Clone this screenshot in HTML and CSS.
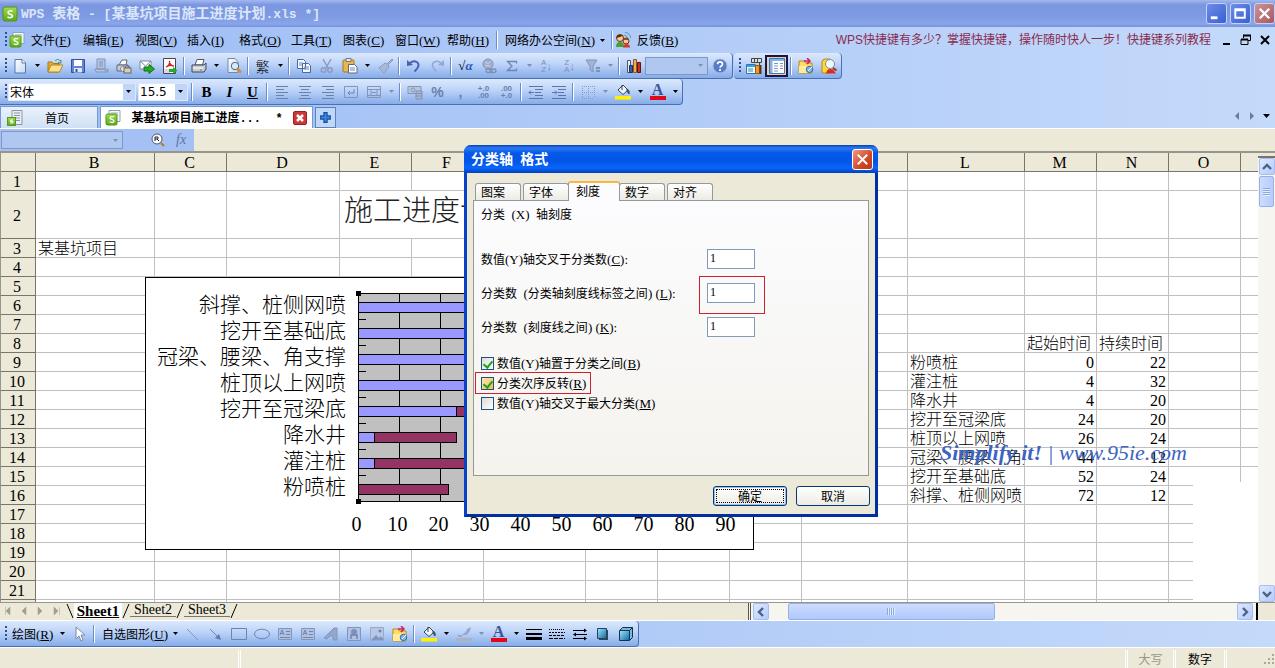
FILE: index.html
```
<!DOCTYPE html>
<html lang="zh-CN">
<head>
    <meta charset="UTF-8">
    <meta name="viewport" content="width=device-width, initial-scale=1.0">
    <title>WPS 表格</title>
    <link rel="stylesheet" href="styles.css">
</head>
<body>

    <!-- icon set, 16x16 -->
    <svg class="sprite" aria-hidden="true">
        <defs>
            <linearGradient id="gGreen" x1="0" y1="0" x2="0" y2="1"><stop offset="0" stop-color="#a4dc50"/><stop offset="1" stop-color="#5aa818"/></linearGradient>
            <linearGradient id="gBlue" x1="0" y1="0" x2="1" y2="1"><stop offset="0" stop-color="#a8e4f8"/><stop offset="1" stop-color="#0868a0"/></linearGradient>
            <linearGradient id="gPage" x1="0" y1="0" x2="1" y2="1"><stop offset="0" stop-color="#fff"/><stop offset="1" stop-color="#c4d8f4"/></linearGradient>
        </defs>
        <symbol id="i-s" viewBox="0 0 16 16"><rect x="1" y="1" width="14" height="14" rx="2" fill="url(#gGreen)" stroke="#4c9814"/><path d="M10.5 5.5C9 4.500 6 4.500 6 6.500S10.500 8 10.500 10 7 12 5.500 10.800" fill="none" stroke="#fff" stroke-width="1.500"/></symbol>
        <symbol id="i-doc" viewBox="0 0 16 16"><path d="M4 .5h11v11H4z" fill="#f4f8fc" stroke="#8aa4b8"/><path d="M6 3h7M6 5h7" stroke="#9ab"/><rect x="1" y="4" width="11" height="11" rx="1.500" fill="url(#gGreen)" stroke="#4c9814"/><path d="M9 7C8 6.300 5 6.300 5 8s4 1 4 3-3 1.700-4.500.8" fill="none" stroke="#fff" stroke-width="1.300"/></symbol>
        <symbol id="i-home" viewBox="0 0 16 16"><path d="M5 .5h10v14H5z" fill="#e8eef4" stroke="#8898a8"/><path d="M7 3h6M7 5.500h6M9 8h4M9 10.500h4" stroke="#8898a8"/><rect x=".5" y="7.500" width="8" height="8" fill="url(#gGreen)" stroke="#5a9a20"/><path d="M6 10H3.500v1.500H6V13H3" fill="none" stroke="#fff"/></symbol>
        <symbol id="i-new" viewBox="0 0 16 16"><path d="M3 1.500h7l3.500 3.500v10H3z" fill="url(#gPage)" stroke="#5878a8"/><path d="M10 1.500V5h3.500" fill="#fff" stroke="#5878a8"/></symbol>
        <symbol id="i-open" viewBox="0 0 16 16"><path d="M1 14V4h4l1.500 1.500H12V14z" fill="#e8a838" stroke="#a87818"/><path d="M1 14l3-7h12l-3.500 7z" fill="#ffe08a" stroke="#b08820"/><path d="M8 3c2-2 4-2 5 0l1-1v3h-3l1-1" fill="none" stroke="#487"/></symbol>
        <symbol id="i-save" viewBox="0 0 16 16"><path d="M1.500 1.500h13v13h-13z" fill="#6484dc" stroke="#3850a0"/><path d="M4 2h8v6H4z" fill="#fff"/><path d="M4 10h8v4.500H4z" fill="#dfe6f4"/><path d="M5.500 11h2v3h-2z" fill="#3850a0"/></symbol>
        <symbol id="i-saveall" viewBox="0 0 16 16"><path d="M4 1h8v10H4zM2 11h10c0 3 2 3 2 0h1v3H4c-2 0-2-3-2-3z" fill="#b4c4e0" stroke="#8294b8"/><path d="M6 4h4M6 6h4M6 8h4" stroke="#8294b8"/></symbol>
        <symbol id="i-perm" viewBox="0 0 16 16"><path d="M3 7l3-5h5l-1 5z" fill="#fff" stroke="#667"/><path d="M1 7h11v6H1z" fill="#c8ccd4" stroke="#667"/><circle cx="7" cy="11" r="2.500" fill="#e0e4ec" stroke="#556" stroke-dasharray="1.500 .8"/><rect x="8" y="10" width="7" height="5" fill="#d8d0b0" stroke="#667"/><path d="M9.500 10V8.500q2-2 4 0V10" fill="none" stroke="#667"/></symbol>
        <symbol id="i-send" viewBox="0 0 16 16"><path d="M1 3h11v8H1z" fill="#fff" stroke="#7a8aa0"/><path d="M1 3l5.500 5L12 3" fill="none" stroke="#7a8aa0"/><path d="M5 9h5V6.500l5.500 4.500-5.500 4.500V13H5z" fill="#28a828" stroke="#107010"/></symbol>
        <symbol id="i-pdf" viewBox="0 0 16 16"><path d="M1.500 .5h12v15h-12z" fill="#fff" stroke="#445"/><path d="M4 9c3-1 4-3 3.500-6C7 5 9 8 12 8 9 7 6 7.500 4 9z" fill="none" stroke="#d02020" stroke-width="1.300"/><path d="M2 11h6v4H2z" fill="#d8dce4"/><path d="M7 11h4V9l4.500 3.500L11 16v-2H7z" fill="#28a828"/></symbol>
        <symbol id="i-print" viewBox="0 0 16 16"><path d="M4 7l2-5.500h7L11.500 7z" fill="#fff" stroke="#556"/><path d="M1 7h12l2-2v6l-2 3H1z" fill="#c8ccd4" stroke="#445"/><path d="M2 10h10" stroke="#fff"/><path d="M9 12h2" stroke="#3a3"/></symbol>
        <symbol id="i-preview" viewBox="0 0 16 16"><path d="M2 .5h7l3 3v11H2z" fill="url(#gPage)" stroke="#7888a0"/><circle cx="9" cy="8" r="3.700" fill="#d4ecfc" stroke="#567"/><path d="M11.500 11l3.500 3.500" stroke="#e08828" stroke-width="2.500"/></symbol>
        <symbol id="i-copy" viewBox="0 0 16 16"><path d="M1.500 1.500h6l2 2v7h-8zM6.500 5.500h6l2 2v7h-8z" fill="#f4f8ff" stroke="#4c68a0"/><path d="M3 5h4M3 7h3M8 9h5M8 11h5" stroke="#6888c0"/></symbol>
        <symbol id="i-cut" viewBox="0 0 16 16"><path d="M4 1l5 9M12 1L7 10" stroke="#8a9cc0" stroke-width="1.500"/><circle cx="4.500" cy="12" r="2.300" fill="none" stroke="#8a9cc0" stroke-width="1.500"/><circle cx="11" cy="12" r="2.300" fill="none" stroke="#8a9cc0" stroke-width="1.500"/></symbol>
        <symbol id="i-paste" viewBox="0 0 16 16"><rect x="1" y="2" width="11" height="12" rx="1" fill="#e8b850" stroke="#a87820"/><path d="M4 .5h5v3H4z" fill="#e8e8e8" stroke="#777"/><path d="M6.500 6.500h6l2.500 2.500v6H6.500z" fill="#fff" stroke="#667"/><path d="M8 10h5M8 12h5" stroke="#6888c0"/></symbol>
        <symbol id="i-brush" viewBox="0 0 16 16"><path d="M15 1l-5 5-2-1-6 5 5 5 5-6-1-2 5-5z" fill="#a8b8d8" stroke="#8a9cc0"/></symbol>
        <symbol id="i-undo" viewBox="0 0 16 16"><path d="M4 5c5-4 10 0 8 4-.8 2-2 3-3.500 4.500" fill="none" stroke="#4a60b0" stroke-width="2"/><path d="M1 8V2l6 5z" fill="#4a60b0"/></symbol>
        <symbol id="i-redo" viewBox="0 0 16 16"><path d="M12 5C7 1 2 5 4 9c.8 2 2 3 3.500 4.500" fill="none" stroke="#94a8d0" stroke-width="1.500"/><path d="M15 8V2L9 7z" fill="#94a8d0"/></symbol>
        <symbol id="i-globe" viewBox="0 0 16 16"><circle cx="7" cy="6" r="5" fill="#a0b0cc" stroke="#8496b8"/><path d="M4 4q3 3 6-1M4 8q3-2 6 1" fill="none" stroke="#c8d4ea"/><rect x="5" y="11" width="6" height="3.500" rx="1.700" fill="none" stroke="#8090b4" stroke-width="1.500"/><rect x="9" y="11" width="6" height="3.500" rx="1.700" fill="none" stroke="#8090b4" stroke-width="1.500"/></symbol>
        <symbol id="i-sum" viewBox="0 0 16 16"><path d="M12.500 5.500V3.500h-9L8 8l-4.500 4.500h9v-2" fill="none" stroke="#7084b0" stroke-width="1.300"/></symbol>
        <symbol id="i-funnel" viewBox="0 0 16 16"><path d="M1 2h11L8 8v6l-3-2V8z" fill="#a4b4d4" stroke="#8294b8"/><path d="M11 9h4v2h-4zM11 12h4v2h-4z" fill="#7c90b8"/></symbol>
        <symbol id="i-chart" viewBox="0 0 16 16"><path d="M1.500 2.500h3v12h-3z" fill="#e8ecf4" stroke="#556"/><path d="M3.500 7.500h3v7h-3z" fill="#3858b8" stroke="#234"/><path d="M7.500 1.500h3v13h-3z" fill="#f0b040" stroke="#854"/><path d="M11.500 4.500h3v10h-3z" fill="#c83020" stroke="#611"/></symbol>
        <symbol id="i-help" viewBox="0 0 16 16"><circle cx="8" cy="8" r="7" fill="#5878c8" stroke="#a8b8dc"/><path d="M5.500 6.200c0-3.200 5-3.200 5 0 0 1.800-2.500 1.800-2.500 3.600M8 11v2" fill="none" stroke="#fff" stroke-width="1.700"/></symbol>
        <symbol id="i-task" viewBox="0 0 16 16"><path d="M5.500.500h10v4h-10z" fill="#e0e0d8" stroke="#444"/><path d="M8.500 1v3M11.500 1v3M13.500 5v3" stroke="#444"/><path d="M.5 6.500h9v9h-9z" fill="#e8f8ff" stroke="#2878b8"/><path d="M1 7h8v2H1z" fill="#38a0e0"/><path d="M2 11h5M2 13h5" stroke="#48a"/><path d="M9.500 7.500h4v8h-4z" fill="#f09828" stroke="#a05810"/><path d="M13.500 7h2v9h-2z" fill="#5a3410"/></symbol>
        <symbol id="i-pane" viewBox="0 0 16 16"><path d="M.5.500h15v15H.500z" fill="#fff" stroke="#3878b8"/><path d="M1 1h14v2H1zM1 1h2.500v14H1z" fill="#80b4e8"/><path d="M5 5.500h4M5 8h4M5 10.500h4M5 13h4M11 5.500h3M11 8h3M11 10.500h3" stroke="#7898c0"/></symbol>
        <symbol id="i-folder" viewBox="0 0 16 16"><path d="M1 3h5l1.500 2H14v10H1z" fill="#ffdc68" stroke="#b88818"/><path d="M1 8h13v7H1z" fill="#ffeb98"/><path d="M6 3h6M9 0l3 3-3 3" fill="none" stroke="#d02060" stroke-width="1.500"/><circle cx="11.500" cy="11.500" r="3.200" fill="#80b8e8" stroke="#2868a8"/><path d="M10 13l4-4" stroke="#fff"/></symbol>
        <symbol id="i-find" viewBox="0 0 16 16"><path d="M1 15V4q0-3 4-3h4v14z" fill="#ffd838" stroke="#b88818"/><path d="M5 15.500q1-6 7-4l3 4z" fill="#d83020"/><circle cx="9" cy="6" r="4.500" fill="#eef8ff" stroke="#889"/><path d="M12 10l3.500 2.500" stroke="#a02818" stroke-width="2"/></symbol>
        <symbol id="i-people" viewBox="0 0 16 16"><path d="M9 3q3 0 4 4M10 .5q5 0 6 6" fill="none" stroke="#6890b0"/><circle cx="5" cy="6" r="3.500" fill="#f8c898" stroke="#6a3410"/><path d="M1.500 6q0-5 7-2.500L5 5z" fill="#5a2c10"/><circle cx="11" cy="9" r="3" fill="#f8c898" stroke="#6a3410"/><path d="M8 8q2-4 6 0z" fill="#a04820"/><path d="M1 15q0-5 4-5t4 5z" fill="#48a030"/><path d="M8 15.500q0-3.500 3.500-3.500t3.500 3.500z" fill="#d83828"/></symbol>
        <symbol id="i-left" viewBox="0 0 16 16"><path d="M2 2.500h12M2 5.500h8M2 8.500h12M2 11.500h8M2 14.500h12" stroke="#6c80a8"/></symbol>
        <symbol id="i-center" viewBox="0 0 16 16"><path d="M2 2.500h12M4 5.500h8M2 8.500h12M4 11.500h8M2 14.500h12" stroke="#6c80a8"/></symbol>
        <symbol id="i-right" viewBox="0 0 16 16"><path d="M2 2.500h12M6 5.500h8M2 8.500h12M6 11.500h8M2 14.500h12" stroke="#6c80a8"/></symbol>
        <symbol id="i-wrap" viewBox="0 0 16 16"><path d="M1.500 2.500h13v11h-13z" fill="none" stroke="#8496b8"/><path d="M11 5v4H5M7 7L5 9l2 2" fill="none" stroke="#7084b0"/></symbol>
        <symbol id="i-merge" viewBox="0 0 16 16"><path d="M1.500 2.500h13v11h-13zM1.500 5.500h13M1.500 11.500h13" fill="none" stroke="#8496b8"/><path d="M5 6v5M11 6v5M6 8.500h4" stroke="#8496b8"/></symbol>
        <symbol id="i-money" viewBox="0 0 16 16"><path d="M1 2.500h13v7H1z" fill="#b8c6e0" stroke="#8496b8"/><circle cx="6" cy="6" r="2" fill="none" stroke="#8496b8"/><path d="M9 7h6v8H9zM9 9.500h6M9 12h6" fill="#a8b8d8" stroke="#8090b4"/></symbol>
        <symbol id="i-indent" viewBox="0 0 16 16"><path d="M1 2.500h14M7 5.500h8M7 8.500h6M7 11.500h8M1 14.500h14M1 8.500h5M4 6.500l2 2-2 2" fill="none" stroke="#5c74a8"/></symbol>
        <symbol id="i-outdent" viewBox="0 0 16 16"><path d="M1 2.500h14M7 5.500h8M7 8.500h6M7 11.500h8M1 14.500h14M1 8.500h5M3 6.500l-2 2 2 2" fill="none" stroke="#5c74a8"/></symbol>
        <symbol id="i-border" viewBox="0 0 16 16"><path d="M2 2.500h12M2 8.500h12M2 14.500h12M2.500 2v12M8.500 2v12M14.500 2v12" stroke="#8a9cc0" stroke-dasharray="1 1"/></symbol>
        <symbol id="i-fill" viewBox="0 0 16 16"><path d="M3 6l5-5 5 5-5 4.500z" fill="#eef4fc" stroke="#345"/><path d="M7 1v5M12 5q3 1 2 5l-2-3z" fill="#4878c0" stroke="#345"/><path d="M0 12h16v3.500H0z" fill="#fff200"/></symbol>
        <symbol id="i-pen" viewBox="0 0 16 16"><path d="M15 1q-1 6-5 8H5q5-2 6-6zM5 9H1l2 2h4z" fill="#98a8c8"/><path d="M0 12h16v3.500H0z" fill="#a8b4c4"/></symbol>
        <symbol id="i-cursor" viewBox="0 0 16 16"><path d="M4 1v12l3-3 2 5 2-1-2-5h4z" fill="#fff" stroke="#7888a8"/></symbol>
        <symbol id="i-line" viewBox="0 0 16 16"><path d="M2 3l11 11" stroke="#8496b8"/></symbol>
        <symbol id="i-arrow" viewBox="0 0 16 16"><path d="M2 3l9 9" stroke="#7084a8"/><path d="M13 14l-6-2 4-4z" fill="#6478a0"/></symbol>
        <symbol id="i-rect" viewBox="0 0 16 16"><path d="M.5 2.500h15v11H.5z" fill="none" stroke="#7084a8"/></symbol>
        <symbol id="i-oval" viewBox="0 0 16 16"><ellipse cx="8" cy="8" rx="7.500" ry="4.800" fill="none" stroke="#7084a8"/></symbol>
        <symbol id="i-textbox" viewBox="0 0 16 16"><path d="M1.500 2.500h13v11h-13z" fill="#b0c2e4" stroke="#8496b8"/><path d="M3 9l2-5 2 5M4 7.500h2M9 5.500h4M9 8.500h4M3 11.500h10" fill="none" stroke="#7084b0"/></symbol>
        <symbol id="i-art" viewBox="0 0 16 16"><path d="M1 12L11 2h3v12h-4v-4H7l-3 3z" fill="#94a6cc" stroke="#8496b8"/></symbol>
        <symbol id="i-clip" viewBox="0 0 16 16"><path d="M1.500 1.500h13v13h-13z" fill="#b0c2e4" stroke="#8496b8"/><circle cx="8" cy="6" r="3" fill="#7c90b8"/><path d="M5 13V9h6v4" fill="none" stroke="#7084b0" stroke-width="1.500"/></symbol>
        <symbol id="i-image" viewBox="0 0 16 16"><path d="M1.500 1.500h13v13h-13z" fill="#b8c8e4" stroke="#98a8c8"/><circle cx="11" cy="5" r="1.500" fill="#7084b0"/><path d="M2 14l5-5 3 3 2-2 3 4z" fill="#8094bc"/></symbol>
        <symbol id="i-weight" viewBox="0 0 16 16"><path d="M0 3.500h16" stroke="#000"/><path d="M0 8h16" stroke="#000" stroke-width="2"/><path d="M0 12.500h16" stroke="#000" stroke-width="3"/></symbol>
        <symbol id="i-dash" viewBox="0 0 16 16"><path d="M0 3.500h16" stroke="#000" stroke-dasharray="1 1"/><path d="M0 6.500h16" stroke="#000" stroke-dasharray="2 1"/><path d="M0 9.500h16" stroke="#000" stroke-dasharray="3 1"/><path d="M0 12.500h16" stroke="#000" stroke-dasharray="4 1"/></symbol>
        <symbol id="i-arrows" viewBox="0 0 16 16"><path d="M1 4.500h13M3 8.500h12M1 12.500h13" stroke="#000"/><path d="M12 2.500l3 2-3 2zM4 6.500l-3 2 3 2zM12 10.500l3 2-3 2z"/></symbol>
        <symbol id="i-shadow" viewBox="0 0 16 16"><path d="M4 4h9v10H4z" fill="#345"/><path d="M2.500 2.500h9v10h-9z" fill="url(#gBlue)" stroke="#246"/></symbol>
        <symbol id="i-cube" viewBox="0 0 16 16"><path d="M1.500 4.500l3-3h10v10l-3 3" fill="#78b8d8" stroke="#135"/><path d="M1.500 4.500h10v10h-10z" fill="url(#gBlue)" stroke="#135"/><path d="M11.500 4.500l3-3" stroke="#135"/></symbol>
        <symbol id="i-caret" viewBox="0 0 5 3"><path d="M0 0h5L2.500 3z" fill="currentColor"/></symbol>
        <symbol id="i-chev" viewBox="0 0 10 10"><path d="M1 7l4-4 4 4" fill="none" stroke="#4d6185" stroke-width="2.400"/></symbol>
    </svg>

    <header class="titlebar">
        <svg class="icon"><use href="#i-s"/></svg>
        <h1><span class="en">WPS </span>表格<span class="en"> - [</span>某基坑项目施工进度计划<span class="en">.xls *]</span></h1>
        <button class="winbtn" aria-label="最小化"><svg viewBox="0 0 20 20"><path d="M4 13h7v3H4z" fill="#fff"/></svg></button>
        <button class="winbtn" aria-label="最大化"><svg viewBox="0 0 20 20"><path d="M4.500 5.500h10v9h-10zM4.500 6.500h10" fill="none" stroke="#fff" stroke-width="2"/></svg></button>
        <button class="winbtn close" aria-label="关闭"><svg viewBox="0 0 20 20"><path d="M5 5l10 10M15 5L5 15" stroke="#fff" stroke-width="2.500"/></svg></button>
    </header>

    <nav class="menubar">
        <span class="grip"></span>
        <svg class="icon"><use href="#i-doc"/></svg>
        <button class="menu">文件<span class="key">(<u>F</u>)</span></button>
        <button class="menu">编辑<span class="key">(<u>E</u>)</span></button>
        <button class="menu">视图<span class="key">(<u>V</u>)</span></button>
        <button class="menu">插入<span class="key">(<u>I</u>)</span></button>
        <button class="menu">格式<span class="key">(<u>O</u>)</span></button>
        <button class="menu">工具<span class="key">(<u>T</u>)</span></button>
        <button class="menu">图表<span class="key">(<u>C</u>)</span></button>
        <button class="menu">窗口<span class="key">(<u>W</u>)</span></button>
        <button class="menu">帮助<span class="key">(<u>H</u>)</span></button>
        <span class="sep"></span>
        <button class="menu long">网络办公空间<span class="key">(<u>N</u>)</span></button>
        <button class="drop" aria-label="网络办公空间选项"><svg class="caret"><use href="#i-caret"/></svg></button>
        <span class="sep"></span>
        <svg class="icon"><use href="#i-people"/></svg>
        <button class="menu">反馈<span class="key">(<u>B</u>)</span></button>
        <a class="tip" href="#">WPS快捷键有多少？掌握快捷键，操作随时快人一步！快捷键系列教程</a>
        <button class="docbtn" aria-label="最小化窗口"><svg viewBox="0 0 12 12"><path d="M2 9h7v2H2z"/></svg></button>
        <button class="docbtn" aria-label="还原窗口"><svg viewBox="0 0 12 12"><path d="M3.500 4V1.500h7v5H8" fill="none" stroke="#000"/><path d="M3 1.500h8" stroke="#000" stroke-width="2"/><path d="M1 5.500h7v5H1z" fill="none" stroke="#000"/><path d="M1 5.500h7" stroke="#000" stroke-width="2"/></svg></button>
        <button class="docbtn" aria-label="关闭窗口"><svg viewBox="0 0 12 12"><path d="M2 2l8 8M10 2l-8 8" stroke="#000" stroke-width="2"/></svg></button>
    </nav>

    <div class="toolrow">
        <div class="toolbar">
            <span class="grip"></span>
            <button class="tool" aria-label="新建"><svg class="icon"><use href="#i-new"/></svg></button>
            <button class="drop" aria-label="新建选项"><svg class="caret"><use href="#i-caret"/></svg></button>
            <button class="tool" aria-label="打开"><svg class="icon"><use href="#i-open"/></svg></button>
            <button class="tool" aria-label="保存"><svg class="icon"><use href="#i-save"/></svg></button>
            <button class="tool" aria-label="全部保存"><svg class="icon"><use href="#i-saveall"/></svg></button>
            <button class="tool" aria-label="权限"><svg class="icon"><use href="#i-perm"/></svg></button>
            <button class="tool" aria-label="发送"><svg class="icon"><use href="#i-send"/></svg></button>
            <button class="tool" aria-label="输出PDF"><svg class="icon"><use href="#i-pdf"/></svg></button>
            <span class="sep"></span>
            <button class="tool" aria-label="打印"><svg class="icon"><use href="#i-print"/></svg></button>
            <button class="drop" aria-label="打印选项"><svg class="caret"><use href="#i-caret"/></svg></button>
            <button class="tool" aria-label="打印预览"><svg class="icon"><use href="#i-preview"/></svg></button>
            <span class="sep"></span>
            <button class="tool trad">繁</button>
            <button class="drop" aria-label="繁简转换选项"><svg class="caret"><use href="#i-caret"/></svg></button>
            <span class="sep"></span>
            <button class="tool" aria-label="复制"><svg class="icon"><use href="#i-copy"/></svg></button>
            <button class="tool" aria-label="剪切"><svg class="icon"><use href="#i-cut"/></svg></button>
            <button class="tool" aria-label="粘贴"><svg class="icon"><use href="#i-paste"/></svg></button>
            <button class="drop" aria-label="粘贴选项"><svg class="caret"><use href="#i-caret"/></svg></button>
            <button class="tool" aria-label="格式刷"><svg class="icon"><use href="#i-brush"/></svg></button>
            <span class="sep"></span>
            <button class="tool" aria-label="撤消"><svg class="icon"><use href="#i-undo"/></svg></button>
            <button class="tool" aria-label="恢复"><svg class="icon"><use href="#i-redo"/></svg></button>
            <span class="sep"></span>
            <button class="tool formula">√<i>α</i></button>
            <button class="tool" aria-label="超链接"><svg class="icon"><use href="#i-globe"/></svg></button>
            <button class="tool" aria-label="求和"><svg class="icon"><use href="#i-sum"/></svg></button>
            <button class="drop off" aria-label="求和选项"><svg class="caret"><use href="#i-caret"/></svg></button>
            <button class="tool sort"><span>A<br>Z</span>↓</button>
            <button class="tool sort"><span>Z<br>A</span>↓</button>
            <button class="tool" aria-label="筛选"><svg class="icon"><use href="#i-funnel"/></svg></button>
            <button class="drop off" aria-label="筛选选项"><svg class="caret"><use href="#i-caret"/></svg></button>
            <span class="sep"></span>
            <button class="tool" aria-label="图表"><svg class="icon"><use href="#i-chart"/></svg></button>
            <label class="combo zoom off"><select aria-label="显示比例"><option></option></select><svg class="caret"><use href="#i-caret"/></svg></label>
            <button class="tool" aria-label="帮助"><svg class="icon"><use href="#i-help"/></svg></button>
        </div>
        <div class="toolbar">
            <span class="grip"></span>
            <button class="tool" aria-label="任务窗格"><svg class="icon"><use href="#i-task"/></svg></button>
            <button class="tool pressed" aria-label="工作窗口"><svg class="icon"><use href="#i-pane"/></svg></button>
            <span class="sep"></span>
            <button class="tool" aria-label="素材库"><svg class="icon"><use href="#i-folder"/></svg></button>
            <button class="tool" aria-label="查找"><svg class="icon"><use href="#i-find"/></svg></button>
        </div>
    </div>

    <div class="toolrow">
        <div class="toolbar">
            <span class="grip"></span>
            <label class="combo font"><select aria-label="字体"><option>宋体</option></select><svg class="caret"><use href="#i-caret"/></svg></label>
            <label class="combo size"><select aria-label="字号"><option>15.5</option></select><svg class="caret"><use href="#i-caret"/></svg></label>
            <span class="sep"></span>
            <button class="tool letter"><b>B</b></button>
            <button class="tool letter"><i>I</i></button>
            <button class="tool letter"><u>U</u></button>
            <span class="sep"></span>
            <button class="tool" aria-label="左对齐"><svg class="icon"><use href="#i-left"/></svg></button>
            <button class="tool" aria-label="居中"><svg class="icon"><use href="#i-center"/></svg></button>
            <button class="tool" aria-label="右对齐"><svg class="icon"><use href="#i-right"/></svg></button>
            <button class="tool" aria-label="自动换行"><svg class="icon"><use href="#i-wrap"/></svg></button>
            <button class="tool" aria-label="合并居中"><svg class="icon"><use href="#i-merge"/></svg></button>
            <button class="drop off" aria-label="合并选项"><svg class="caret"><use href="#i-caret"/></svg></button>
            <span class="sep"></span>
            <button class="tool" aria-label="货币"><svg class="icon"><use href="#i-money"/></svg></button>
            <button class="tool percent">%</button>
            <button class="tool percent">,</button>
            <button class="tool decimal">+.0<br>.00</button>
            <button class="tool decimal">.00<br>+.0</button>
            <span class="sep"></span>
            <button class="tool" aria-label="减少缩进"><svg class="icon"><use href="#i-outdent"/></svg></button>
            <button class="tool" aria-label="增加缩进"><svg class="icon"><use href="#i-indent"/></svg></button>
            <span class="sep"></span>
            <button class="tool" aria-label="边框"><svg class="icon"><use href="#i-border"/></svg></button>
            <button class="drop off" aria-label="边框选项"><svg class="caret"><use href="#i-caret"/></svg></button>
            <button class="tool" aria-label="填充颜色"><svg class="icon"><use href="#i-fill"/></svg></button>
            <button class="drop" aria-label="填充选项"><svg class="caret"><use href="#i-caret"/></svg></button>
            <button class="tool fontcolor"><span>A</span></button>
            <button class="drop" aria-label="字体颜色选项"><svg class="caret"><use href="#i-caret"/></svg></button>
        </div>
    </div>

    <div class="doctabs">
        <button class="doctab"><svg class="icon"><use href="#i-home"/></svg><span>首页</span></button>
        <div class="doctab open">
            <svg class="icon"><use href="#i-doc"/></svg>
            <span>某基坑项目施工进度<span class="en">...  *</span></span>
            <button class="tabclose" aria-label="关闭标签"><svg viewBox="0 0 12 12"><path d="M3 3l6 6M9 3l-6 6" stroke="#fff" stroke-width="2.500"/></svg></button>
        </div>
        <button class="addtab" aria-label="新建标签"><svg viewBox="0 0 12 12"><path d="M4.500 1.500h3v3h3v3h-3v3h-3v-3h-3v-3h3z" fill="#3c80e0" stroke="#1c4ca0"/></svg></button>
        <span class="tabnav">
            <svg viewBox="0 0 36 8"><path d="M5 0v8L1 4z" fill="#6c7c98"/><path d="M16 0v8l4-4z" fill="#6c7c98"/><path d="M29 2h7l-3.500 4z"/></svg>
        </span>
    </div>

    <div class="formulabar">
        <div class="namepart">
            <label class="combo name off"><input aria-label="名称框"><svg class="caret"><use href="#i-caret"/></svg></label>
            <svg class="icon" viewBox="0 0 16 16"><circle cx="7" cy="7" r="5" fill="#fff" stroke="#556"/><path d="M5 9V5h3v2H5m2 0l2 2" fill="none" stroke="#124"/><path d="M11 11l3 3" stroke="#b87828" stroke-width="2"/></svg>
            <span class="fx">fx</span>
        </div>
        <input class="formula-input" aria-label="编辑栏">
    </div>

    <main class="sheet">
        <div class="cells">
            <table class="grid">
                <colgroup>
                    <col class="c-head"><col class="c-b"><col class="c-std"><col class="c-d"><col class="c-std"><col class="c-std"><col class="c-g"><col class="c-std"><col class="c-std"><col class="c-std"><col class="c-k"><col class="c-l"><col class="c-std"><col class="c-std"><col class="c-std"><col>
                </colgroup>
                <thead>
                    <tr><th></th><th>B</th><th>C</th><th>D</th><th>E</th><th>F</th><th>G</th><th>H</th><th>I</th><th>J</th><th>K</th><th>L</th><th>M</th><th>N</th><th>O</th><th></th></tr>
                </thead>
                <tbody id="rows"></tbody>
            </table>
            <div class="blank"></div>

            <section class="chart">
                <div class="labels" id="chartLabels"></div>
                <div class="plot" id="chartPlot"></div>
                <div class="axis" id="chartAxis"></div>
            </section>

            <p class="mark"><b>Simplify it!</b> | www.95ie.com</p>
        </div>
        <div class="vscroll">
            <span class="split"></span>
            <button class="scrollbtn" aria-label="向上滚动"><svg viewBox="0 0 10 10"><use href="#i-chev"/></svg></button>
            <span class="thumb"></span>
            <button class="scrollbtn last" aria-label="向下滚动"><svg class="down" viewBox="0 0 10 10"><use href="#i-chev"/></svg></button>
        </div>
    </main>

    <div class="sheetbar">
        <svg class="sheetnav" viewBox="0 0 66 16"><path d="M5.500 4v8M10 4v8L6 8zM26 4v8l-4-4zM38 4v8l4-4zM54 4v8l4-4zM59.500 4v8" fill="#a09e90" stroke="#a09e90" stroke-width=".5"/></svg>
        <svg class="slash" viewBox="0 0 8 16"><path d="M1 1l6 14" stroke="#000" fill="none"/></svg>
        <button class="sheettab on">Sheet1</button>
        <svg class="slash" viewBox="0 0 8 16"><path d="M7 1L1 15" stroke="#000" fill="none"/></svg>
        <button class="sheettab">Sheet2</button>
        <svg class="slash" viewBox="0 0 8 16"><path d="M7 1L1 15" stroke="#000" fill="none"/></svg>
        <button class="sheettab">Sheet3</button>
        <svg class="slash" viewBox="0 0 8 16"><path d="M7 1L1 15" stroke="#000" fill="none"/></svg>
        <div class="hscroll">
            <button class="scrollbtn" aria-label="向左滚动"><svg class="left" viewBox="0 0 10 10"><use href="#i-chev"/></svg></button>
            <span class="track"><span class="thumb"></span></span>
            <button class="scrollbtn" aria-label="向右滚动"><svg class="right" viewBox="0 0 10 10"><use href="#i-chev"/></svg></button>
        </div>
    </div>

    <div class="toolrow drawrow">
        <div class="toolbar">
            <span class="grip"></span>
            <button class="word">绘图<span class="key">(<u>R</u>)</span></button>
            <button class="drop" aria-label="绘图菜单"><svg class="caret"><use href="#i-caret"/></svg></button>
            <button class="tool" aria-label="选择对象"><svg class="icon"><use href="#i-cursor"/></svg></button>
            <span class="sep"></span>
            <button class="word wide">自选图形<span class="key">(<u>U</u>)</span></button>
            <button class="drop" aria-label="自选图形菜单"><svg class="caret"><use href="#i-caret"/></svg></button>
            <button class="tool" aria-label="直线"><svg class="icon"><use href="#i-line"/></svg></button>
            <button class="tool" aria-label="箭头"><svg class="icon"><use href="#i-arrow"/></svg></button>
            <button class="tool" aria-label="矩形"><svg class="icon"><use href="#i-rect"/></svg></button>
            <button class="tool" aria-label="椭圆"><svg class="icon"><use href="#i-oval"/></svg></button>
            <button class="tool" aria-label="文本框"><svg class="icon"><use href="#i-textbox"/></svg></button>
            <button class="tool" aria-label="竖排文本框"><svg class="icon"><use href="#i-textbox"/></svg></button>
            <button class="tool" aria-label="艺术字"><svg class="icon"><use href="#i-art"/></svg></button>
            <button class="tool" aria-label="剪贴画"><svg class="icon"><use href="#i-clip"/></svg></button>
            <button class="tool" aria-label="图片"><svg class="icon"><use href="#i-image"/></svg></button>
            <button class="tool" aria-label="素材"><svg class="icon"><use href="#i-folder"/></svg></button>
            <span class="sep"></span>
            <button class="tool" aria-label="填充"><svg class="icon"><use href="#i-fill"/></svg></button>
            <button class="drop" aria-label="填充选项"><svg class="caret"><use href="#i-caret"/></svg></button>
            <button class="tool" aria-label="线条颜色"><svg class="icon"><use href="#i-pen"/></svg></button>
            <button class="drop off" aria-label="线条选项"><svg class="caret"><use href="#i-caret"/></svg></button>
            <button class="tool fontcolor"><span>A</span></button>
            <button class="drop" aria-label="字体颜色选项"><svg class="caret"><use href="#i-caret"/></svg></button>
            <button class="tool" aria-label="线型"><svg class="icon"><use href="#i-weight"/></svg></button>
            <button class="tool" aria-label="虚线"><svg class="icon"><use href="#i-dash"/></svg></button>
            <button class="tool" aria-label="箭头样式"><svg class="icon"><use href="#i-arrows"/></svg></button>
            <button class="tool" aria-label="阴影"><svg class="icon"><use href="#i-shadow"/></svg></button>
            <button class="tool" aria-label="三维"><svg class="icon"><use href="#i-cube"/></svg></button>
        </div>
    </div>

    <footer class="status">
        <span class="cell first"></span>
        <span class="cell fill"></span>
        <span class="cell key-off">大写</span>
        <span class="cell key-on">数字</span>
        <span class="cell end"><svg viewBox="0 0 12 12"><path d="M9 2h2v2H9zM9 6h2v2H9zM5 6h2v2H5zM9 10h2v2H9zM5 10h2v2H5zM1 10h2v2H1z" fill="#aca899"/></svg></span>
    </footer>

    <div class="dialog" role="dialog" aria-labelledby="dlgTitle">
        <div class="dlg-title">
            <h2 id="dlgTitle">分类轴<span class="en"> </span>格式</h2>
            <button class="winbtn dlg-close" aria-label="关闭对话框"><svg viewBox="0 0 20 20"><path d="M5 5l10 10M15 5L5 15" stroke="#fff" stroke-width="2"/></svg></button>
        </div>
        <form class="dlg-body">
            <div class="dlg-tabs">
                <button type="button">图案</button>
                <button type="button">字体</button>
                <button type="button" class="on">刻度</button>
                <button type="button">数字</button>
                <button type="button">对齐</button>
            </div>
            <div class="panel">
                <p>分类<span class="key">  (X)  </span>轴刻度</p>
                <div class="fields">
                    <div class="field">
                        <label for="cross">数值<span class="key">(Y)</span>轴交叉于分类数<span class="key">(<u>C</u>):</span></label>
                        <input id="cross" value="1">
                    </div>
                    <div class="field">
                        <label for="tickLabel">分类数<span class="key">  (</span>分类轴刻度线标签之间<span class="key">) (<u>L</u>):</span></label>
                        <span class="boxed"><input id="tickLabel" value="1"></span>
                    </div>
                    <div class="field">
                        <label for="tick">分类数<span class="key">  (</span>刻度线之间<span class="key">) (<u>K</u>):</span></label>
                        <input id="tick" value="1">
                    </div>
                </div>
                <div class="checks">
                    <label><input type="checkbox" checked><span>数值<span class="key">(Y)</span>轴置于分类之间<span class="key">(<u>B</u>)</span></span></label>
                    <label class="boxed"><input type="checkbox" class="hot" checked><span>分类次序反转<span class="key">(<u>R</u>)</span></span></label>
                    <label><input type="checkbox"><span>数值<span class="key">(Y)</span>轴交叉于最大分类<span class="key">(<u>M</u>)</span></span></label>
                </div>
            </div>
            <div class="dlg-buttons">
                <button type="button" class="default">确定</button>
                <button type="button">取消</button>
            </div>
        </form>
    </div>

    <script src="script.js"></script>
</body>
</html>
```
FILE: styles.css
```
:root{
    --cjk: "Noto Sans CJK SC", sans-serif;
    --song: "Liberation Serif", "Noto Sans CJK SC", serif;
    --beige: #ece9d8;
    --bar-top: #dce9fd;
    --bar-bottom: #86ace8;
    --line: #c0c0c0;
}

*{
    box-sizing: border-box;
}

body{
    margin: 0;
    height: 100vh;
    display: flex;
    flex-direction: column;
    overflow: hidden;
    font: 12px/16px var(--cjk);
    color: #000;
    background: var(--beige);
}

button, input, select{
    font: inherit;
    color: inherit;
    margin: 0;
    padding: 0;
    border: 0;
    background: none;
}

h1, h2, p{
    margin: 0;
}

.sprite{
    position: absolute;
    width: 0;
    height: 0;
}

.icon{
    width: 16px;
    height: 16px;
    flex: none;
}

.key{
    font-family: "Liberation Serif", serif;
    font-size: 13px;
    line-height: 14px;
    white-space: pre;
}

.en{
    font-family: "Liberation Mono", monospace;
    font-size: 12px;
    white-space: pre;
}

/* title bar */
.titlebar{
    flex: none;
    height: 27px;
    display: flex;
    align-items: center;
    gap: 3px;
    padding: 0 0 0 2px;
    background: linear-gradient(#a3b8ef 0, #7a96e0 5px, #7e9ae2 16px, #88a6ec 24px, #7890dc);
}

.titlebar h1{
    flex: 1;
    font-size: 14px;
    line-height: 18px;
    font-weight: bold;
    color: #dce6fa;
}

.titlebar .en{
    font-size: 13px;
}

.winbtn{
    width: 21px;
    height: 21px;
    border: 1px solid #c4d2f6;
    border-radius: 3px;
    background: linear-gradient(135deg, #6c8cec, #3a60d0);
    display: flex;
}

.winbtn svg{
    width: 19px;
    height: 19px;
}

.winbtn.close{
    background: linear-gradient(135deg, #cc9498, #a85860);
}

/* menu bar */
.menubar{
    flex: none;
    height: 26px;
    display: flex;
    align-items: center;
    background: linear-gradient(90deg, #9dbcf5, #c4dafa);
}

.grip{
    flex: none;
    width: 2px;
    height: 16px;
    margin: 0 2px 0 5px;
    background: repeating-linear-gradient(#30508c 0 2px, transparent 2px 4px);
}

.menubar .menu{
    width: 52px;
    padding-left: 6px;
    text-align: left;
    white-space: nowrap;
}

.menubar .long{
    width: 96px;
    padding-left: 5px;
}

.menubar .sep{
    margin-left: 1px;
}

.sep{
    flex: none;
    width: 6px;
    height: 18px;
    background: linear-gradient(90deg, transparent 2px, #6a8cc8 2px 3px, #fff 3px 4px, transparent 4px);
}

.tip{
    margin-left: auto;
    margin-right: 10px;
    color: #8a2c50;
    text-decoration: none;
    white-space: nowrap;
    font-family: "Liberation Sans", var(--cjk);
}

.docbtn{
    width: 14px;
    height: 14px;
    margin-right: 5px;
}

.docbtn:last-child{
    margin-right: 2px;
}

.docbtn svg{
    display: block;
    width: 12px;
    height: 12px;
}

/* toolbars */
.toolrow{
    flex: none;
    height: 26px;
    display: flex;
    gap: 1px;
    background: linear-gradient(90deg, #9dbcf5, #c4dafa);
}

.toolbar{
    display: flex;
    align-items: center;
    padding-right: 1px;
    border-bottom: 1px solid #4a70b0;
    border-right: 1px solid #4a70b0;
    border-radius: 0 4px 4px 0;
    background: linear-gradient(var(--bar-top), #bcd3f8 45%, var(--bar-bottom));
}

.toolbar + .toolbar{
    border-radius: 4px;
}

.toolbar .grip{
    margin-right: 1px;
}

.tool{
    flex: none;
    width: 23px;
    height: 22px;
    display: flex;
    align-items: center;
    justify-content: center;
}

.drop{
    flex: none;
    width: 12px;
    height: 22px;
    display: flex;
    align-items: center;
    justify-content: center;
}

.caret{
    flex: none;
    width: 5px;
    height: 3px;
}

.off .caret{
    color: #7c90b4;
}

.pressed{
    border: 2px solid #10184c;
    background: #fcc89c;
}

.trad{
    font-size: 14px;
    font-weight: 300;
}

.formula{
    font: bold 13px/16px var(--song);
}

.formula i{
    color: #2c54b8;
}

.sort{
    color: #7c90b8;
    font: 11px/14px "Liberation Sans", sans-serif;
}

.sort span{
    font-size: 8px;
    line-height: 7px;
}

.letter{
    font: bold 15px/18px "Liberation Serif", serif;
}

.percent{
    color: #6c80a8;
    font: bold 14px/16px "Liberation Sans", sans-serif;
}

.decimal{
    color: #6c80a8;
    font: bold 8px/7px "Liberation Sans", sans-serif;
    display: block;
}

.fontcolor span{
    width: 16px;
    height: 16px;
    border-bottom: 4px solid #e00818;
    color: #3c5498;
    font: bold 16px/12px "Liberation Serif", serif;
    text-align: center;
}

.combo{
    flex: none;
    height: 18px;
    display: flex;
    align-items: center;
    padding-right: 4px;
    background: linear-gradient(90deg, #fff calc(100% - 12px), #c0d6f8 calc(100% - 12px));
    border: 1px solid #dce8fc;
}

.combo select, .combo input{
    flex: 1;
    min-width: 0;
    width: 0;
    appearance: none;
    outline: 0;
}

.combo.font{
    width: 128px;
    padding-left: 1px;
}

.combo.size{
    width: 50px;
    margin: 0 1px 0 2px;
    padding-left: 1px;
    font-family: "DejaVu Sans", sans-serif;
}

.combo.off{
    border-color: #7c98c8;
    background: #b0c8f0;
}

.combo.zoom{
    width: 63px;
}

.word{
    width: 48px;
    padding-left: 4px;
    text-align: left;
    white-space: nowrap;
}

.word.wide{
    width: 72px;
    padding-left: 5px;
}

/* document tabs */
.doctabs{
    flex: none;
    height: 24px;
    display: flex;
    align-items: flex-end;
    gap: 2px;
    border-bottom: 1px solid #fff;
    background: linear-gradient(90deg, #9dbcf5, #c4dafa);
}

.doctab{
    width: 98px;
    height: 22px;
    display: flex;
    align-items: center;
    padding: 0 6px;
    border: 1px solid #7898d0;
    border-bottom: 0;
    background: linear-gradient(#eaf2fc, #d0e0f4);
}

.doctab > span{
    flex: 1;
    text-align: center;
    white-space: nowrap;
}

.doctab.open{
    width: 213px;
    padding: 0 5px 0 4px;
    background: #fff;
    font-weight: bold;
}

.tabclose{
    width: 14px;
    height: 14px;
    border: 1px solid #982020;
    border-radius: 2px;
    background: #cc3838;
    display: flex;
}

.addtab{
    width: 21px;
    height: 21px;
    padding: 3px;
    border: 1px solid #5c80c0;
    background: #c0d8f8;
}

.addtab svg, .tabclose svg{
    display: block;
    width: 100%;
}

.tabnav{
    margin-left: auto;
    width: 36px;
    height: 16px;
    margin-right: 5px;
}

.tabnav svg{
    display: block;
    width: 36px;
    height: 8px;
}

/* formula bar */
.formulabar{
    flex: none;
    height: 22px;
    display: flex;
}

.namepart{
    width: 194px;
    display: flex;
    align-items: center;
    padding-left: 1px;
    background: #a4c0f4;
}

.combo.name{
    width: 122px;
    margin-right: 27px;
}

.fx{
    margin-left: 10px;
    color: #5c74a0;
    font: italic 14px/18px "Liberation Serif", serif;
}

.formula-input{
    flex: 1;
    background: var(--beige);
}

/* sheet */
.sheet{
    flex: 1;
    min-height: 0;
    display: flex;
    border-top: 2px solid #98968a;
}

.cells{
    flex: 1;
    min-width: 0;
    position: relative;
    overflow: hidden;
    background: #fff;
}

.grid{
    width: 100%;
    table-layout: fixed;
    border-collapse: separate;
    border-spacing: 0;
    font: 300 16px/16px var(--song);
}

.c-head{ width: 36px; }
.c-std{ width: 72px; }
.c-b{ width: 119px; }
.c-d{ width: 113px; }
.c-g{ width: 102px; }
.c-k{ width: 106px; }
.c-l{ width: 117px; }

.grid th{
    height: 19px;
    padding: 2px 2px 0 0;
    font-weight: normal;
    background: var(--beige);
    border-right: 1px solid #78766a;
    border-bottom: 1px solid #78766a;
}

.grid th:first-child{
    border-left: 1px solid #98968a;
}

.grid td{
    height: 19px;
    padding: 2px 2px 0;
    overflow: hidden;
    white-space: nowrap;
    border-right: 1px solid var(--line);
    border-bottom: 1px solid var(--line);
}

.grid td.num{
    text-align: right;
}

.grid td:last-child, .grid th:last-child{
    border-right: 0;
}

.grid .tall td, .grid .tall th{
    height: 48px;
}

.grid td.heading{
    padding: 0 4px 8px;
    font-size: 29px;
    line-height: 36px;
    color: #222;
}

.grid .tail td, .grid .tail th{
    height: 4px;
    padding: 0;
    line-height: 3px;
    border-bottom: 0;
}

.blank{
    position: absolute;
    right: 0;
    bottom: 0;
    width: 65px;
    height: 120px;
    background: #fff;
}

/* chart lies over the cells */
.chart{
    position: absolute;
    left: 145px;
    top: 124px;
    width: 609px;
    height: 273px;
    display: grid;
    grid-template-columns: 200px 370px;
    grid-template-rows: 209px 32px;
    column-gap: 12px;
    padding-top: 15px;
    border: 1px solid #000;
    background: #fff;
}

.labels{
    text-align: right;
    font: 300 21px/26px var(--cjk);
    white-space: nowrap;
    display: flex;
    flex-direction: column;
    align-items: flex-end;
    margin-top: -3px;
}

.plot{
    position: relative;
    border: 1px solid #000;
    background: repeating-linear-gradient(90deg, transparent 0 40px, #000 40px 41px), var(--line);
}

/* selection handles of the axis */
.plot::before, .plot::after{
    content: "";
    position: absolute;
    left: -3px;
    width: 5px;
    height: 5px;
    background: #000;
}

.plot::before{ top: -3px; }
.plot::after{ bottom: -3px; }

.bar{
    height: 26px;
    display: flex;
    align-items: center;
    background: linear-gradient(#000, #000) left bottom / 7px 1px no-repeat;
}

.bar span{
    height: 11px;
    border: 1px solid #000;
    border-left: 0;
}

.bar .start{
    background: #9999ff;
}

.bar .last{
    background: #943464;
}

.axis{
    grid-column: 2;
    display: flex;
    margin: 9px -20px 0 -22px;
    font: 20px/26px var(--song);
}

.axis span{
    flex: none;
    width: 41px;
    text-align: center;
}

.mark{
    position: absolute;
    right: 71px;
    top: 287px;
    font: italic 22px/26px "Liberation Serif", serif;
    color: #3c64c0;
    white-space: nowrap;
}

/* scroll bars */
.vscroll{
    width: 17px;
    display: flex;
    flex-direction: column;
    align-items: center;
    background: #f6f5f0;
}

.vscroll .split{
    width: 17px;
    height: 5px;
    border-bottom: 2px solid #78766a;
    background: var(--beige);
}

.scrollbtn{
    flex: none;
    width: 16px;
    height: 17px;
    display: flex;
    align-items: center;
    justify-content: center;
    border: 1px solid #a8bcf0;
    border-radius: 2px;
    background: linear-gradient(135deg, #dce8ff, #b4ccfa);
}

.scrollbtn svg{
    width: 10px;
    height: 10px;
}

.scrollbtn .down{ transform: rotate(180deg); }
.scrollbtn .left{ transform: rotate(-90deg); }
.scrollbtn .right{ transform: rotate(90deg); }

.scrollbtn.last{
    margin-top: auto;
}

.thumb{
    border: 1px solid #98b0e8;
    border-radius: 2px;
}

.vscroll .thumb{
    width: 15px;
    height: 31px;
    margin-top: 1px;
    background: repeating-linear-gradient(#8ca8e0 0 1px, #e4eeff 1px 2px) center / 7px 8px no-repeat, linear-gradient(90deg, #cddcff, #b6ccfa);
}

/* sheet tabs */
.sheetbar{
    flex: none;
    height: 18px;
    display: flex;
    border-top: 1px solid #98968a;
    background: var(--beige);
}

.sheetnav{
    width: 66px;
    height: 16px;
}

.slash{
    width: 8px;
    height: 16px;
}

.sheettab{
    height: 14px;
    width: 46px;
    font: 14px/14px "Liberation Serif", serif;
    border-bottom: 1px solid #78766a;
}

.sheettab.on{
    width: 48px;
    height: 16px;
    font-size: 15px;
    font-weight: bold;
    text-decoration: underline;
    background: #fff;
    border: 0;
}

.hscroll{
    margin-left: auto;
    width: 40%;
    display: flex;
    border-left: 3px double #58564c;
    margin-right: 17px;
    padding: 0 3px 0 2px;
    border-right: 2px solid #000;
    background: #f6f5f0;
}

.hscroll .track{
    flex: 1;
    display: flex;
    justify-content: flex-start;
    padding-left: 19px;
}

.hscroll .thumb{
    width: 46%;
    background: repeating-linear-gradient(90deg, #8ca8e0 0 1px, #e4eeff 1px 2px) center / 8px 7px no-repeat, linear-gradient(#cddcff, #b0c8fa);
}

/* drawing toolbar */
.drawrow{
    height: 28px;
    border-top: 1px solid #fff;
    border-bottom: 1px solid #fff;
}

/* status bar */
.status{
    flex: none;
    height: 20px;
    display: flex;
    align-items: center;
    padding-top: 1px;
    background: var(--beige);
}

.status .cell{
    height: 18px;
    line-height: 18px;
    border-right: 3px double #fff;
    text-align: center;
}

.status .first{ width: 241px; }
.status .fill{ flex: 1; }
.status .key-off{ width: 48px; color: #98968a; }
.status .key-on{ width: 51px; }
.status .end{ width: 48px; border: 0; text-align: right; }
.status .end svg{ width: 12px; height: 12px; }

/* dialog window */
.dialog{
    position: absolute;
    left: 464px;
    top: 145px;
    width: 414px;
    border: 3px solid #0842c8;
    border-top: 0;
    border-bottom-color: #0030a0;
    border-right-color: #0030a0;
    border-radius: 7px 7px 0 0;
    background: var(--beige);
}

.dlg-title{
    height: 28px;
    margin: 0 -3px;
    padding: 0 5px 0 7px;
    display: flex;
    align-items: center;
    justify-content: space-between;
    border-radius: 7px 7px 0 0;
    background: linear-gradient(#0a3fae 0, #2a7af4 3px, #0558e8 8px, #0354e4 16px, #0866fc 23px, #0340b8);
}

.dlg-title h2{
    font-size: 14px;
    line-height: 18px;
    color: #fff;
}

.dlg-close{
    border-color: #fff;
    background: linear-gradient(135deg, #f09880, #d04828 60%, #b83818);
}

.dlg-body{
    padding: 8px 5px 8px 6px;
}

.dlg-tabs{
    height: 19px;
    display: flex;
    align-items: flex-end;
    gap: 2px;
    padding-left: 2px;
}

.dlg-tabs button{
    width: 46px;
    height: 17px;
    padding-left: 5px;
    text-align: left;
    line-height: 16px;
    border: 1px solid #919b9c;
    border-bottom: 0;
    border-radius: 3px 3px 0 0;
    background: linear-gradient(#fff, #ecebe4);
}

.dlg-tabs .on{
    width: 52px;
    height: 20px;
    margin: 0 -3px -1px;
    padding-left: 7px;
    padding-bottom: 2px;
    border-top: 2px solid #f8b840;
    background: #fcfcfe;
    z-index: 1;
}

.panel{
    height: 276px;
    margin-right: 1px;
    padding: 5px 7px;
    border: 1px solid #919b9c;
    background: linear-gradient(#fcfcfe, #f4f3ee);
}

.fields{
    margin-top: 20px;
}

.field{
    height: 34px;
    display: flex;
    align-items: center;
}

.field label{
    width: 226px;
    white-space: nowrap;
}

.field input{
    width: 48px;
    height: 20px;
    padding: 0 0 2px 2px;
    border: 1px solid #7f9db9;
    background: #fff;
    font: 12px/16px "Liberation Serif", serif;
}

.field .boxed{
    outline: 1px solid #d02030;
    margin-left: -7px;
    padding: 6px 9px 10px 7px;
    display: flex;
    margin-top: 4px;
}

.checks{
    display: flex;
    flex-direction: column;
    align-items: flex-start;
    margin-top: 9px;
}

.checks label{
    height: 20px;
    display: flex;
    align-items: center;
}

.checks label > span{
    white-space: nowrap;
}

.checks .boxed{
    margin-left: -5px;
    padding: 0 4px 0 5px;
    outline: 1px solid #d02030;
}

.checks input{
    appearance: none;
    width: 13px;
    height: 13px;
    margin-right: 3px;
    border: 1px solid #1d5281;
    background: linear-gradient(135deg, #dcdcd7, #fff);
}

.checks .hot{
    background: linear-gradient(135deg, #fce8b8, #f8b848);
}

.checks input:checked::after{
    content: "";
    display: block;
    width: 4px;
    height: 7px;
    margin: 1px 0 0 3px;
    border: solid #21a121;
    border-width: 0 2px 2px 0;
    transform: rotate(40deg);
}

.dlg-buttons{
    display: flex;
    justify-content: flex-end;
    gap: 9px;
    padding-top: 10px;
}

.dlg-buttons button{
    width: 74px;
    height: 20px;
    line-height: 16px;
    border: 1px solid #003c74;
    border-radius: 3px;
    background: linear-gradient(#fff, #ecebe4);
}

.dlg-buttons .default{
    box-shadow: inset 0 0 0 1px #a0bcf0;
    outline: 1px dotted #000;
    outline-offset: -4px;
}
```
FILE: script.js
```
const columns = 15; // B to P
const lastRow = 21;

// name, start day, duration
const tasks = [
    ["粉喷桩", 0, 22],
    ["灌注桩", 4, 32],
    ["降水井", 4, 20],
    ["挖开至冠梁底", 24, 20],
    ["桩顶以上网喷", 26, 24],
    ["冠梁、腰梁、角支撑", 44, 12],
    ["挖开至基础底", 52, 24],
    ["斜撑、桩侧网喷", 72, 12]
];

const maxDay = 90;

// cells that hold something, by row and column index (B = 0)
const cells = {
    3: {0: "某基坑项目"},
    8: {11: "起始时间", 12: "持续时间"}
};

tasks.forEach((task, i) => {
    cells[9 + i] = {10: task[0], 11: task[1], 12: task[2]};
});

function buildRows(){
    let html = "";
    for(let r = 1; r <= lastRow; r++){
        html += r == 2 ? '<tr class="tall">' : "<tr>";
        html += `<th>${r}</th>`;
        for(let c = 0; c < columns; c++){
            if(r == 2 && c == 3){
                html += '<td class="heading" colspan="4">施工进度计划</td>';
                c += 3;
                continue;
            }
            const value = cells[r] && cells[r][c] !== undefined ? cells[r][c] : "";
            html += typeof value == "number" ? `<td class="num">${value}</td>` : `<td>${value}</td>`;
        }
        html += "</tr>";
    }
    html += '<tr class="tail"><th></th>' + "<td></td>".repeat(columns) + "</tr>";
    document.querySelector("#rows").innerHTML = html;
}

function buildChart(){
    const labels = document.querySelector("#chartLabels");
    const plot = document.querySelector("#chartPlot");
    const axis = document.querySelector("#chartAxis");

    tasks.slice().reverse().forEach(([name, start, days]) => {
        labels.innerHTML += `<span>${name}</span>`;
        const first = start ? `<span class="start" style="width:${start / maxDay * 100}%"></span>` : "";
        plot.innerHTML += `<div class="bar">${first}<span class="last" style="width:${days / maxDay * 100}%"></span></div>`;
    });

    for(let day = 0; day <= maxDay; day += 10){
        axis.innerHTML += `<span>${day}</span>`;
    }
}

buildRows();
buildChart();
```
